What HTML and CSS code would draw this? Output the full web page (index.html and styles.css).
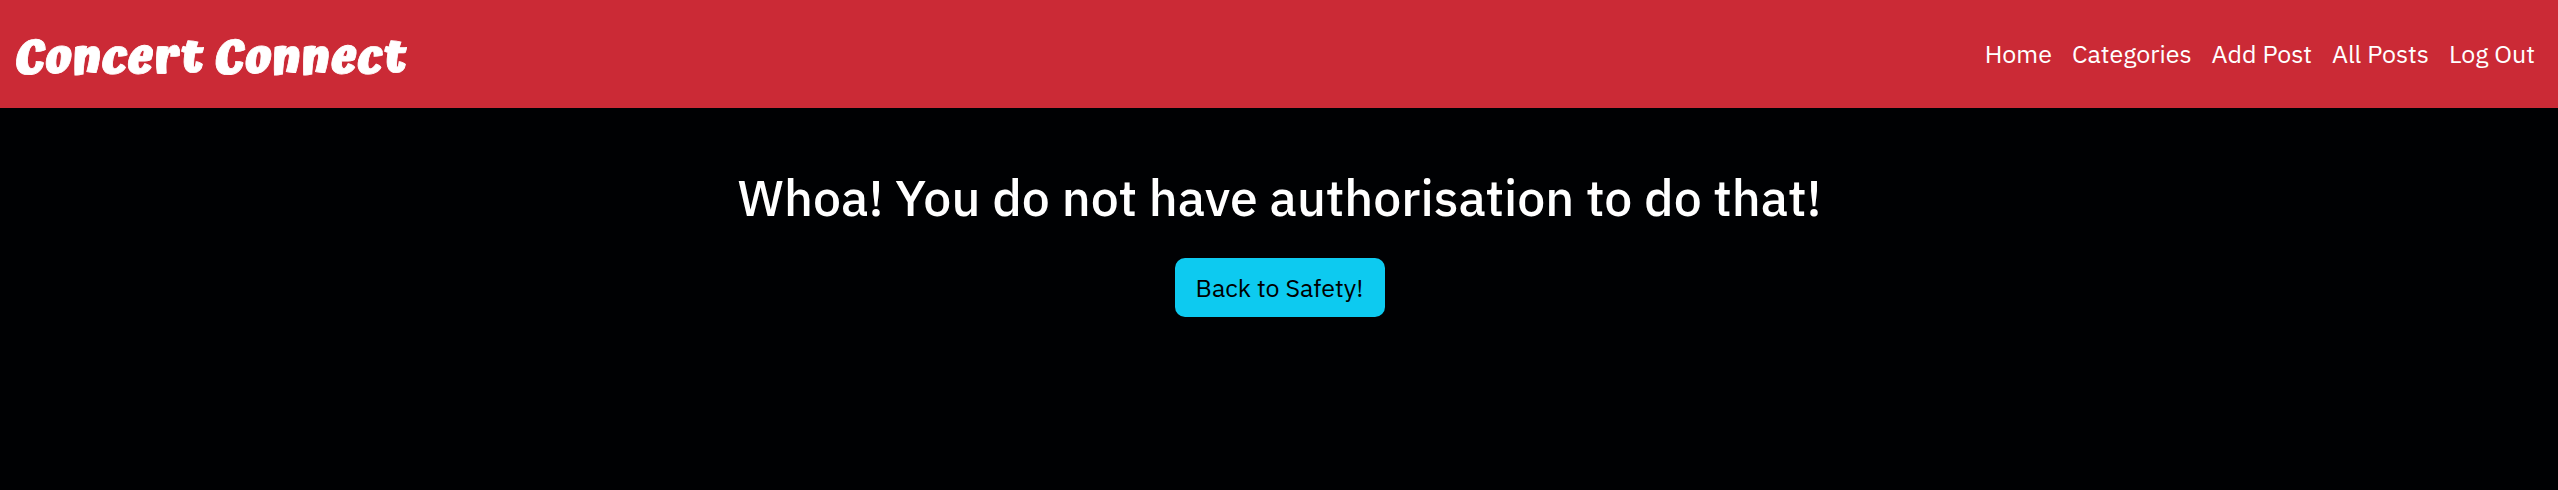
FILE: index.html
```html
<!DOCTYPE html>
<html lang="en">
<head>
<meta charset="utf-8">
<title>Concert Connect</title>
<link rel="stylesheet" href="styles.css">
</head>
<body>
<header class="navbar">
  <a class="brand">Concert Connect</a>
  <nav class="links">
    <a class="link">Home</a>
    <a class="link">Categories</a>
    <a class="link">Add Post</a>
    <a class="link">All Posts</a>
    <a class="link">Log Out</a>
  </nav>
</header>
<main class="content">
  <h1 class="title">Whoa! You do not have authorisation to do that!</h1>
  <a class="button">Back to Safety!</a>
</main>
</body>
</html>
```
FILE: styles.css
```css
* { box-sizing: border-box; }
body {
  margin: 0;
  min-height: 490px;
  background: #000103;
  color: #fff;
  font-family: "IBM Plex Sans", Roboto, sans-serif;
}
.navbar {
  display: flex;
  justify-content: space-between;
  height: 108px;
  padding: 0 23px 0 15px;
  background: #cb2a36;
}
.brand {
  height: 60px;
  margin-top: 29px;
  font: 700 49px/60px Atma, Lato, sans-serif;
  -webkit-text-stroke: 0.8px #fff;
  stroke-linejoin: round;
  transform: skewX(-5deg);
  white-space: nowrap;
}
.links {
  display: flex;
  gap: 20px;
  padding-top: 36px;
}
.link {
  font-size: 25px;
  line-height: 36px;
  white-space: nowrap;
}
.content {
  display: flex;
  flex-direction: column;
  align-items: center;
  padding: 60px 0 0 1px;
}
.title {
  margin: 0;
  font-size: 50px;
  font-weight: 500;
  line-height: 60px;
}
.button {
  width: 210px;
  height: 59px;
  margin-top: 30px;
  border-radius: 10px;
  background: #0dcaf0;
  color: #000;
  font-size: 25px;
  line-height: 59px;
  text-align: center;
}
```
